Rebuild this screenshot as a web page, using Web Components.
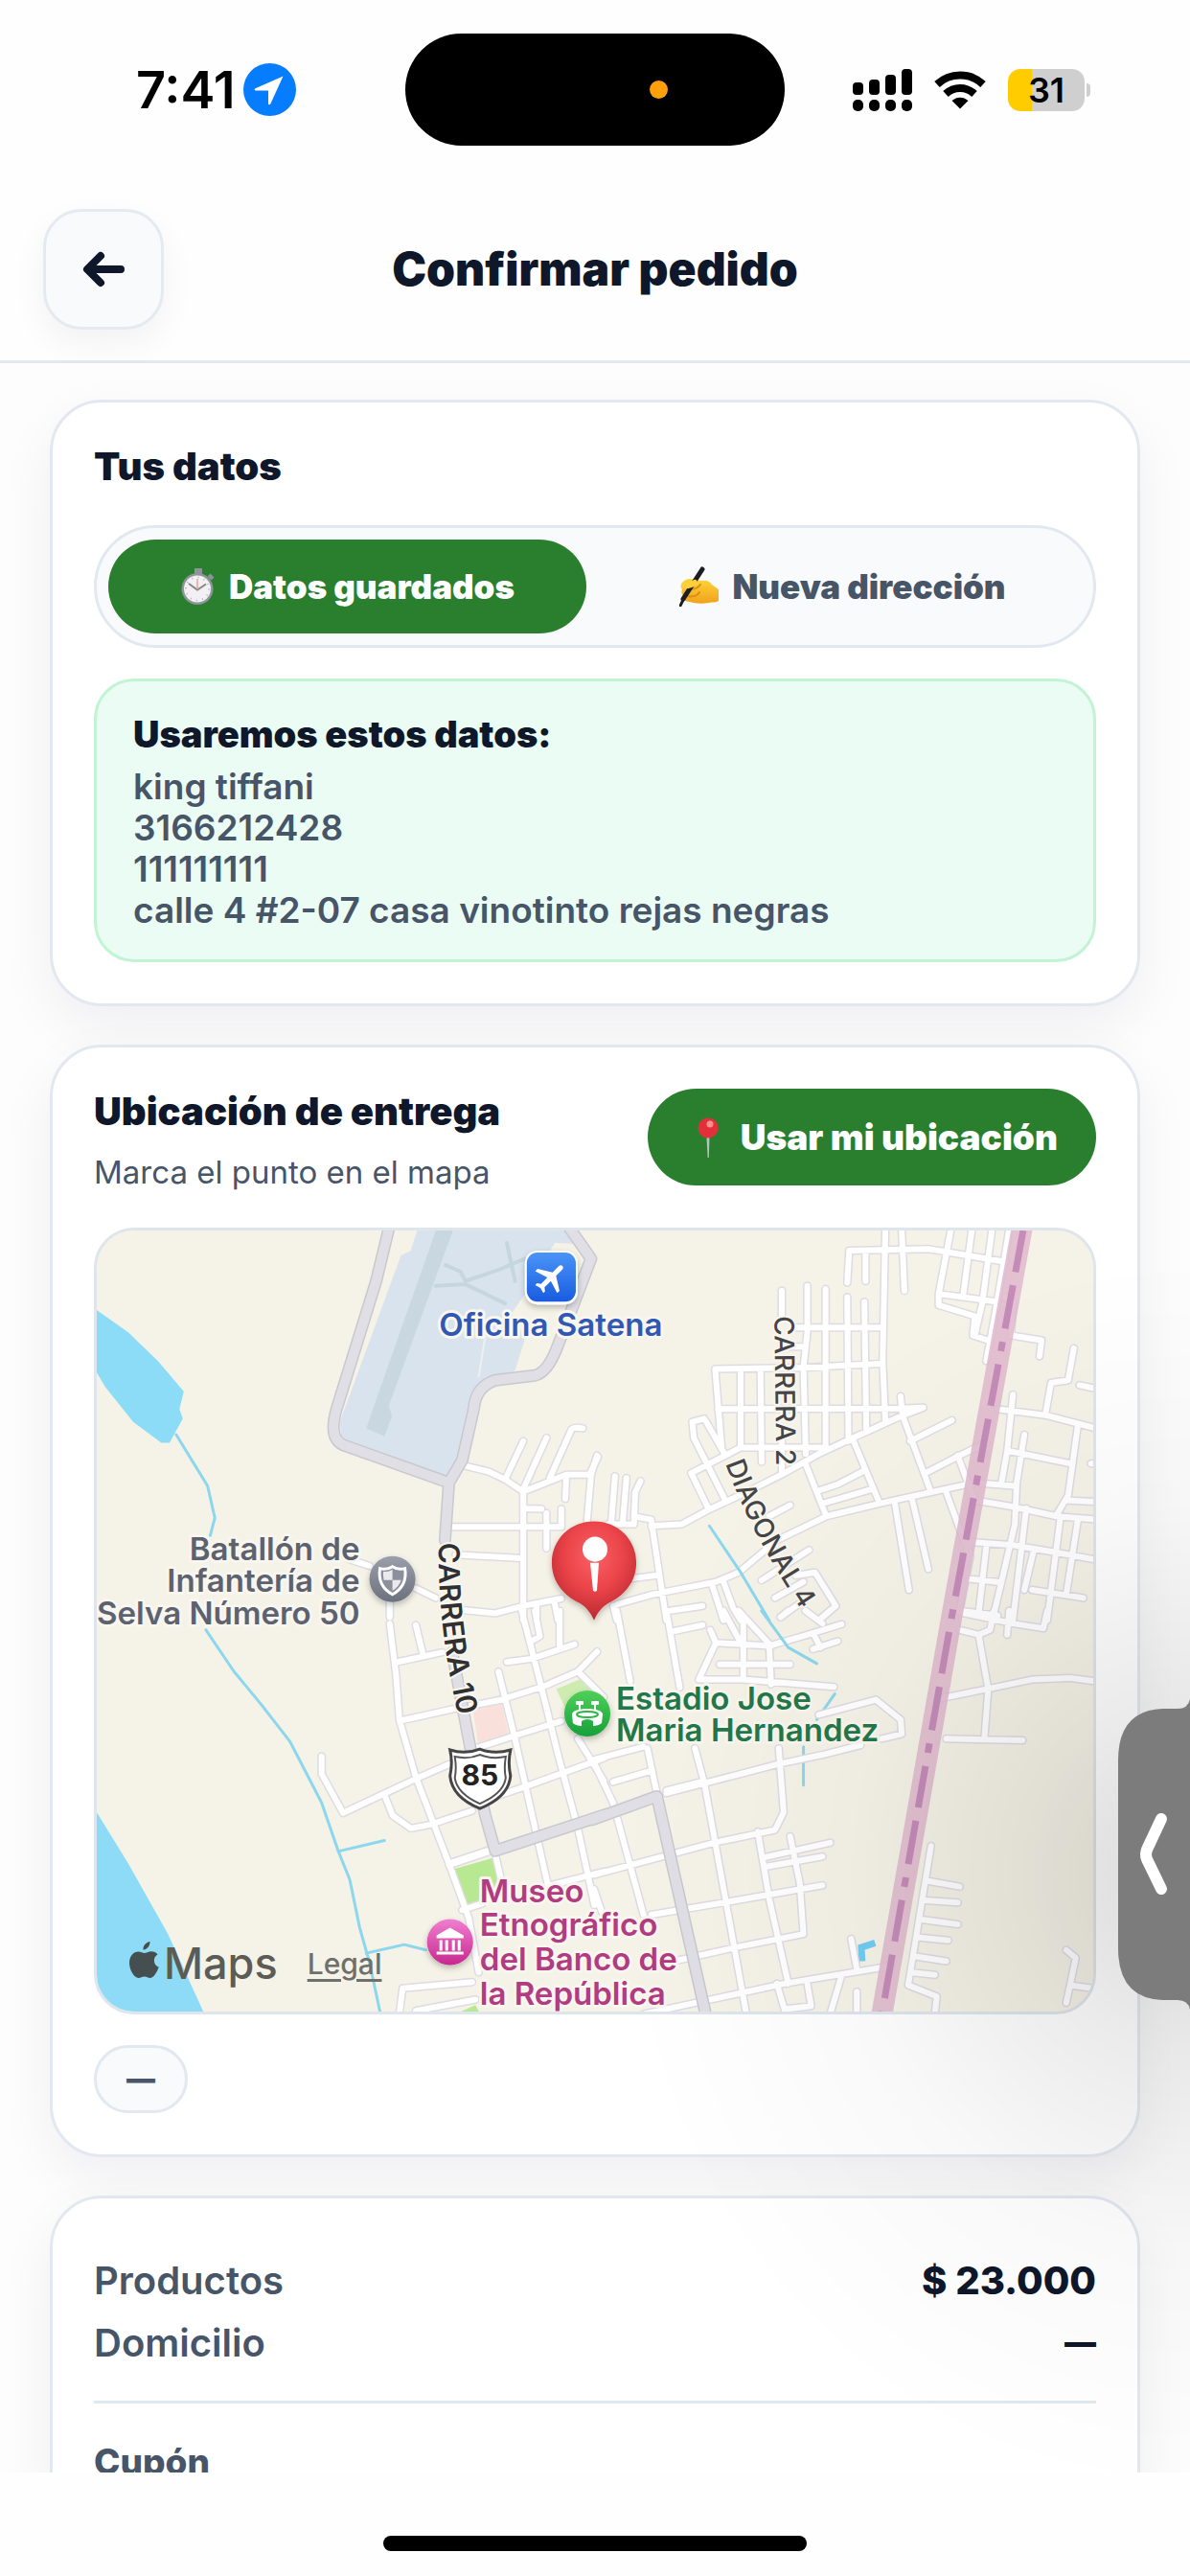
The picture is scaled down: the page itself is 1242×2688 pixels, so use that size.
<!DOCTYPE html>
<html lang="es">
<head>
<meta charset="utf-8">
<meta name="viewport" content="width=device-width, initial-scale=1">
<title>Confirmar pedido</title>
<style>
  html, body { margin: 0; height: 100%; }
  body { background: #fefefe; color: #0f172a; font-family: Inter, "Liberation Sans", sans-serif; overflow: hidden; }
</style>
</head>
<body>
<order-screen></order-screen>
<script>
const define = (name, html) => {
  const template = document.createElement('template');
  template.innerHTML = html;
  customElements.define(name, class extends HTMLElement {
    constructor() {
      super();
      this.attachShadow({ mode: 'open' }).append(template.content.cloneNode(true));
    }
  });
};

define('status-bar', `
<style>
  :host { display: grid; grid-template-columns: 1fr auto 1fr; align-items: center; height: 187px; color: #000; flex: none; }
  .left { display: flex; align-items: center; gap: 8px; padding-left: 142px; }
  .right { display: flex; align-items: center; justify-content: flex-end; gap: 23px; padding-right: 104px; }
  time { font-size: 54px; line-height: 56px; font-weight: 600; }
  .island { width: 396px; height: 117px; border-radius: 59px; background: #000; display: flex; align-items: center; justify-content: flex-end; box-sizing: border-box; padding-right: 122px; }
  .dot { width: 19px; height: 19px; border-radius: 50%; background: #ff9f0a; }
  .battery { display: flex; align-items: center; gap: 2px; }
  .cell { width: 80px; height: 44px; border-radius: 13px; background: linear-gradient(90deg, #ffcc00 31%, #cfcfcf 31%); font-size: 36px; font-weight: 600; line-height: 44px; text-align: center; }
  .nub { width: 4px; height: 14px; border-radius: 0 4px 4px 0; background: #cfcfcf; }
  svg { display: block; }
</style>
<div class="left">
  <time>7:41</time>
  <svg width="55" height="55" viewBox="0 0 55 55"><circle cx="27.500" cy="27.500" r="27.500" fill="#067cff"/><path d="M41.500 13.500 12.500 26.300c-1.400.7-1 2.300.5 2.300h13v13.300c0 1.600 1.700 1.900 2.400.4z" fill="#fff"/></svg>
</div>
<div class="island"><span class="dot"></span></div>
<div class="right">
  <svg width="62" height="44" viewBox="0 0 62 44"><rect x="0" y="14" width="11" height="13" rx="4"/><rect x="17" y="11" width="11" height="16" rx="4"/><rect x="34" y="6" width="11" height="21" rx="4"/><rect x="51" y="0" width="11" height="27" rx="4"/><rect x="0" y="32" width="11" height="12" rx="5"/><rect x="17" y="32" width="11" height="12" rx="5"/><rect x="34" y="32" width="11" height="12" rx="5"/><rect x="51" y="32" width="11" height="12" rx="5"/></svg>
  <svg width="54" height="40" viewBox="0 0 54 40"><g fill="none" stroke="#000" stroke-width="8"><path d="M3 14C16.500 1.300 37.500 1.300 51 14"/><path d="M12 24C20.500 16 33.500 16 42 24"/></g><path d="M18.500 31C23.500 26.500 30.500 26.500 35.500 31L27 39.500z"/></svg>
  <div class="battery"><div class="cell">31</div><div class="nub"></div></div>
</div>`);

define('page-header', `
<style>
  :host { display: grid; grid-template-columns: 1fr auto 1fr; align-items: center; flex: none; padding: 31px 45px 32px; border-bottom: 3px solid #e2e8f0; }
  button { width: 126px; height: 126px; padding: 0; border: 3px solid #e5eaf1; border-radius: 40px; background: #f8fafc; box-shadow: 0 14px 36px rgba(15,23,42,.05); display: grid; place-items: center; }
  h1 { margin: 0; font-size: 48px; line-height: 60px; font-weight: 900; }
</style>
<button type="button" aria-label="Volver"><svg width="44" height="38" viewBox="0 0 44 38" fill="none" stroke="#0f172a" stroke-width="8" stroke-linecap="round" stroke-linejoin="round"><path d="M40 19H6M19 5 5 19l14 14"/></svg></button>
<h1><slot></slot></h1>`);

define('app-card', `
<style>
  :host { display: flex; flex-direction: column; padding: 43px; border: 3px solid #e3e8f0; border-radius: 54px; background: #fff; box-shadow: 0 22px 60px rgba(15,23,42,.06); }
</style>
<slot></slot>`);

define('section-title', `
<style>
  :host { display: block; }
  h2 { margin: 0; font-size: 40px; line-height: 48px; font-weight: 900; }
</style>
<h2><slot></slot></h2>`);

define('data-switch', `
<style>
  :host { display: grid; grid-template-columns: 1fr 1fr; gap: 18px; margin-top: 37px; padding: 12px; border: 3px solid #e2e8f0; border-radius: 64px; background: #f8fafc; }
  button { display: flex; align-items: center; justify-content: center; gap: 13px; height: 98px; border: 0; border-radius: 49px; background: transparent; color: #475569; font: 900 35px/44px Inter, "Liberation Sans", sans-serif; padding: 0; }
  .on { background: #2a7f2e; color: #fff; }
</style>
<button type="button" class="on" aria-pressed="true">
  <svg width="38" height="40" viewBox="0 0 38 40"><path d="M15 1h8v7h-8z" fill="#8d959b"/><path d="m30 8 4 4" stroke="#8d959b" stroke-width="4"/><circle cx="18" cy="22.500" r="16.500" fill="#8e9499"/><circle cx="18" cy="22.500" r="14" fill="#f2f0f2"/><circle cx="18" cy="22.500" r="12" fill="none" stroke="#b9b7bc" stroke-width="2" stroke-dasharray="1 5.300"/><path d="m9 17 9 6.500 9-6" fill="none" stroke="#878783" stroke-width="2"/><path d="M18 12v11" stroke="#e9a2a2" stroke-width="1.500"/></svg>
  <span>Datos guardados</span>
</button>
<button type="button" aria-pressed="false">
  <svg width="42" height="42" viewBox="0 0 42 42"><defs><linearGradient id="skin" x2="0" y2="1"><stop stop-color="#ffd43a"/><stop offset="1" stop-color="#f0a21c"/></linearGradient></defs><path d="M3 17c3-4 9-5 12-3l9 1c5-1 8 1 10 4l7 5v12c-3 2-7 1-10 2-7 1-14 1-20-1-5 0-7-3-6-6-3-2-3-5-2-7-2-2-2-5 0-7z" fill="url(#skin)"/><path d="M11 24c5 0 9-2 11-5M8 31c5 1 11 0 13-4" fill="none" stroke="#dd8f13" stroke-width="2" stroke-linecap="round"/><path d="M24 3 4 34" stroke="#1d1d22" stroke-width="5" stroke-linecap="round"/><path d="M5 33 1 41" stroke="#1d1d22" stroke-width="3" stroke-linecap="round"/><path d="M5 20c4 1 8-1 11-3" fill="none" stroke="#ffd03a" stroke-width="6" stroke-linecap="round"/></svg>
  <span>Nueva dirección</span>
</button>`);

define('saved-data', `
<style>
  :host { display: block; margin-top: 32px; padding: 33px 38px 30px; border: 3px solid #c3f3d5; border-radius: 42px; background: #eafcf3; }
  strong { display: block; font-size: 38px; line-height: 44px; font-weight: 900; margin-bottom: 11px; }
  div { color: #475569; font-size: 37px; line-height: 43px; font-weight: 600; }
</style>
<strong>Usaremos estos datos:</strong>
<div>king tiffani</div><div>3166212428</div><div>111111111</div><div>calle 4 #2-07 casa vinotinto rejas negras</div>`);

define('location-head', `
<style>
  :host { display: flex; justify-content: space-between; align-items: flex-start; margin-bottom: 37px; }
  p { margin: 18px 0 0; color: #475569; font-size: 33px; line-height: 42px; }
  button { display: flex; align-items: center; gap: 19px; height: 101px; padding: 0 40px 0 48px; border: 0; border-radius: 51px; background: #2a7f2e; color: #fff; font: 900 37px/48px Inter, "Liberation Sans", sans-serif; }
</style>
<div><section-title>Ubicación de entrega</section-title><p>Marca el punto en el mapa</p></div>
<button type="button">
  <svg width="30" height="42" viewBox="0 0 30 42"><path d="M13.500 20h3L15.800 42h-1.200z" fill="#b7c3bb"/><circle cx="15" cy="11" r="10.500" fill="#e2303a"/><circle cx="17" cy="7" r="3.500" fill="#ff8d8d"/></svg>
  <span>Usar mi ubicación</span>
</button>`);

/* Map tiles: each group of streets is written in the units of its own tile. */
const tiles = {
  nw: 'translate(90 1270) scale(.34439 .33333)',
  ne: 'translate(620 1270) scale(.39668 .33333)',
  sw: 'translate(90 1680) scale(.34439 .33333)',
  se: 'translate(620 1680) scale(.39668 .33333)'
};
const streets = {
  nw: 'M1140 775L1220 795L1270 820L1325 858L1455 805L1530 805M1270 820L1325 700M1325 850L1395 690M1405 815L1470 665Q1475 655 1505 660M1455 805L1452 880M1548 745L1530 805L1518 950M1325 858L1325 1260M1100 968L1440 968M1325 910L1380 912M1395 925L1395 1035M1440 912L1440 968M1120 1055L1320 1066M1140 1228L1240 1238L1325 1215L1440 1192M1365 1215L1365 1260M1420 1208L1430 1260M1000 1160L1060 1190M921 1190L921 1250M800 1070L860 1090',
  ne: 'M493 230L493 310M493 690L493 800M560 215L560 360L550 470L556 740M608 225L608 720M665 250L668 700M710 265L715 670M765 40L758 450L765 640M808 40L815 230M665 205L670 105L880 100L980 120L1080 140M713 105L713 200M937 40L905 240L905 275L1000 310L995 370L1035 385M992 40L970 240M1045 40L1020 265L1000 370M1090 40L1055 290L1030 450M905 240L1060 265M530 345L755 345M515 405L550 405M318 475L550 470L755 458M318 475L335 720M385 475L385 720M437 475L440 765M325 600L800 598L865 595L800 625L680 690L590 740L500 800L400 860L300 915L230 960L150 965M805 560L810 620L885 860M830 700L940 635M870 800L960 745L1030 705M385 720L610 720M385 720L255 800L300 910M258 640L290 630L345 745M258 640L262 690L345 885M555 770L610 935M680 695L750 895M590 855L640 835L705 795M600 895L730 850M610 935L480 1010L380 1110L320 1140L150 1180L60 1210M610 935L750 895L885 860L1000 830L1100 840M955 745L1000 890M790 895L827 1165M835 880L878 1100M925 860L980 1040M460 935L515 900M440 1135L565 1040M475 1190L550 1140M490 1250L560 1190M530 1120L580 1110L635 1215L600 1250M45 960L55 810M75 960L85 815M105 960L108 860L122 825M35 960L105 960M105 935L150 945L190 1260M95 1130L160 1120M200 1230L285 1215M310 1150L340 1260M340 1140L365 1220L385 1260M50 1215L60 1260M-10 800L10 750M1080 250L1100 265L1095 370L1175 385L1170 435M1260 410L1245 510L1200 518L1185 620M1275 525L1325 538M1060 600L1190 620L1325 662M1100 555L1085 730L1070 830M1085 730L1250 770M1130 680L1110 830L1105 960L1070 1140L1050 1240M1270 655L1245 870L1215 930M1240 885L1325 890M1000 885L1100 905L1215 935L1325 945M1135 910L1100 1260M985 1015L1100 1025L1200 1045L1325 1072M1225 935L1190 1260M1270 950L1240 1180M1155 1040L1130 1165M1030 1030L1010 1240M980 1130L1060 1140M1150 1165L1285 1190M980 1020L988 1060L960 1230L1060 1245M1305 770L1325 770',
  sw: 'M921 40L940 200L950 340L1000 520L1100 790L1160 960L1190 1130M1000 45L1020 130M945 160L1080 130M960 342L1100 310L1250 280L1390 235L1490 190L1548 128M715 455L715 510L780 632L1000 525L1100 480M905 575L930 640L985 680L1045 668L1170 625M1180 430L1300 390L1440 345M1200 595L1330 550L1570 460M1250 190L1300 400L1365 700L1400 860M1320 0L1380 240L1430 450L1490 680L1540 920M1360 0L1375 80L1350 95M1435 0L1435 110M1275 160L1350 150L1480 105M1490 190L1568 270M1490 400L1568 530M1240 760L1260 850M1100 795L1215 755M1100 790L1215 750M1400 860L1570 815M1140 935L1200 915M950 1260L960 1180L1170 1160M1000 1250L1180 1215',
  se: 'M60 0L95 220M190 0L225 240M205 65L285 45M340 0L385 100M380 0L465 110M305 60L320 100L460 110L560 75L650 42M555 0L600 40M490 20L510 0M590 30L620 0M575 70L595 115M575 120L640 95M320 100L275 215L390 215L630 238M392 30L392 215M460 110L465 230M330 168L515 168M590 325L740 278L805 340L808 385L755 400M190 570L480 480L600 450L700 420M190 562L290 532M485 430L498 630L475 685L315 725L0 825M265 430L290 540L400 1260M140 430L165 570M0 465L130 425M0 475L50 600L130 950M50 535L150 500M430 690L460 900L510 1165M450 770L620 725M450 800L600 768M515 705L540 850L550 1010L380 1050L210 1095M150 950L350 910L600 858M0 870L20 940M130 1260L500 1165L780 1110M480 1165L500 1245L570 1235L560 1165M650 1140L620 1260M690 1190L690 1260M675 1025L690 1120M885 735L825 1170L900 1205L895 1260M880 845L960 862M870 905L955 912M860 965L955 980M850 1020L930 1030M845 1080L925 1095M835 1130L895 1138M1240 1060L1265 1085L1250 1170L1310 1180M1250 1170L1240 1225M905 275L1030 245L1150 215L1250 210L1325 222M1010 75L1035 245L1025 400M925 400L1125 405M960 60L1010 75L1040 60L1050 0M960 5L1100 40L1180 55L1190 0M1090 0L1085 75'
};
const avenues = {
  nw: 'M922 20L880 200L760 600Q735 690 780 712L1100 830M1455 20L1530 130L1430 400Q1400 485 1360 495L1240 510Q1180 530 1175 600L1140 760L1100 830L1088 1010',
  sw: 'M1110 130L1165 430L1210 640L1240 750L1570 638',
  se: 'M-5 653L165 580L295 1270'
};
const layer = (set, cls) => Object.entries(set).map(([tile, d]) => `<path class="${cls}" transform="${tiles[tile]}" d="${d}"/>`).join('');

define('delivery-map', `
<style>
  :host { display: block; position: relative; border: 3px solid #dfe5ec; border-radius: 42px; overflow: hidden; background: #f5f2e7; }
  svg { display: block; width: 100%; height: auto; }
  path { vector-effect: non-scaling-stroke; }
  .case, .road, .acase, .avenue, .creek, .taxi { fill: none; stroke-linecap: round; stroke-linejoin: round; }
  .case { stroke: #dfdbe3; stroke-width: 9; }
  .road { stroke: #fff; stroke-width: 6; }
  .acase { stroke: #c9c8ce; stroke-width: 13; }
  .avenue { stroke: #dfdfe5; stroke-width: 10; }
  .creek { stroke: #8cd7ee; stroke-width: 3; }
  .taxi { stroke: #c6d6df; stroke-width: 4; }
  text { font-family: Inter, "Liberation Sans", sans-serif; font-size: 33px; font-weight: 600; paint-order: stroke; stroke: #f8f6ee; stroke-width: 6px; stroke-linejoin: round; }
  .street { font-size: 28px; font-weight: 500; fill: #454547; stroke-width: 4px; }
  .main { font-size: 30px; font-weight: 600; fill: #303033; }
  .end { text-anchor: end; fill: #5d6270; }
  .green { fill: #23784a; }
  .pink { fill: #b13c82; }
  .plain { font-size: 30px; font-weight: 700; fill: #222; stroke: none; }
  footer { position: absolute; left: 34px; bottom: 24px; display: flex; align-items: center; color: #5c5c57; }
  .brand { font-size: 45px; line-height: 52px; font-weight: 500; margin-left: 5px; }
  footer svg { width: 31px; height: 46px; }
  a { color: #6f6f6b; font-size: 30px; line-height: 36px; font-weight: 500; margin-left: 31px; text-decoration-thickness: 3px; text-underline-offset: 5px; }
</style>
<svg viewBox="102 1284 1038 813" role="img" aria-label="Mapa de entrega">
  <defs>
    <linearGradient id="blue" x2="0" y2="1"><stop stop-color="#4a94f7"/><stop offset="1" stop-color="#1a5ce0"/></linearGradient>
    <linearGradient id="grey" x2="0" y2="1"><stop stop-color="#9a9fab"/><stop offset="1" stop-color="#6c717e"/></linearGradient>
    <linearGradient id="leaf" x2="0" y2="1"><stop stop-color="#4fd05a"/><stop offset="1" stop-color="#16a03a"/></linearGradient>
    <linearGradient id="rose" x2="0" y2="1"><stop stop-color="#f07fd0"/><stop offset="1" stop-color="#c8278f"/></linearGradient>
    <radialGradient id="red" cx=".5" cy=".35" r=".7"><stop stop-color="#fb6265"/><stop offset=".5" stop-color="#ea4349"/><stop offset="1" stop-color="#b0242a"/></radialGradient>
    <filter id="soft" x="-30%" y="-30%" width="160%" height="160%"><feDropShadow dx="0" dy="3" stdDeviation="3" flood-opacity=".25"/></filter>
    <path id="c10" d="M458 1609C458 1680 464 1728 484 1815"/>
    <path id="c2" d="M808 1373L810 1545"/>
    <path id="d4" d="M757 1527Q785 1605 845 1692"/>
  </defs>
  <rect x="90" y="1270" width="1060" height="840" fill="#f5f2e7"/>
  <g transform="${tiles.nw}">
    <path fill="#d9e3ee" d="M1010 20L985 105L955 120L770 640L775 695L1100 820L1140 740L1180 540L1230 505L1300 480L1330 380L1290 300L1330 240L1420 80L1490 85L1450 20Z"/>
    <path fill="#c8d7e0" d="M1068 20L1120 20L918 590L928 622L905 685L850 660L870 600Z"/>
    <path class="taxi" d="M1090 150L1135 170L1150 200L1250 165L1330 130M1060 215L1150 210L1270 270M1275 80L1300 200"/>
    <path fill="none" stroke="#eef0ee" stroke-width="2" d="M1210 370L1190 500"/>
    <path fill="#8cdcf8" d="M20 280L130 360L220 450L298 545L285 600L295 630L255 705L230 705L145 640L60 530L20 460Z"/>
    <path class="creek" d="M275 680L370 840L392 940L378 995"/>
  </g>
  <g transform="${tiles.sw}">
    <path fill="#8edbf7" d="M20 605L130 790L250 1010L365 1270L20 1270Z"/>
    <path class="creek" d="M365 60L450 190L530 290L620 410L715 600L765 750L800 840L830 990L860 1100L895 1270M765 752L905 718M850 1070L965 1043L1030 1060"/>
    <path fill="#b9e892" d="M1105 810L1235 772L1262 850L1180 912L1148 920ZM1120 1260L1180 1232L1200 1270Z"/>
    <path fill="#cdecb0" d="M1425 245L1505 210L1550 260L1450 300Z"/>
    <path fill="#fae0da" d="M1172 305L1260 288L1282 398L1190 425Z"/>
  </g>
  <path class="creek" transform="${tiles.se}" d="M550 425L550 545M632 260L585 340"/>
  <path transform="${tiles.se}" fill="none" stroke="#72cdf2" stroke-width="7" d="M704 1095L702 1052L738 1038"/>
  ${layer(streets, 'case')}${layer(streets, 'road')}
  <path class="creek" transform="${tiles.ne}" d="M303 965L385 1110L460 1260"/>
  <path class="creek" transform="${tiles.se}" d="M440 0L510 115L585 165"/>
  <path fill="none" stroke="#dfb9cd" stroke-opacity=".85" stroke-width="22" d="M1067 1275L993 1684L919 2105"/>
  <path fill="none" stroke="#c083b5" stroke-opacity=".85" stroke-width="7" stroke-dasharray="44 14 46 14 10 14" d="M1067 1284L993 1684L919 2105"/>
  ${layer(avenues, 'acase')}${layer(avenues, 'avenue')}

  <text class="street main"><textPath href="#c10">CARRERA 10</textPath></text>
  <text class="street"><textPath href="#c2">CARRERA 2</textPath></text>
  <text class="street"><textPath href="#d4">DIAGONAL 4</textPath></text>

  <g filter="url(#soft)"><rect x="548" y="1305" width="55" height="56" rx="13" fill="#fff"/><rect x="550" y="1307" width="51" height="51" rx="11" fill="url(#blue)"/></g>
  <path fill="#fff" transform="translate(575 1333) rotate(45) scale(1.700) translate(-11.500 -12)" d="M21 16v-2l-8-5V3.500c0-.83-.67-1.500-1.500-1.500S10 2.670 10 3.500V9l-8 5v2l8-2.500V19l-2 1.500V22l3.500-1 3.500 1v-1.500L13 19v-5.500l8 2.500z"/>
  <text x="575" y="1394" text-anchor="middle" fill="#3159b4">Oficina Satena</text>

  <g filter="url(#soft)"><circle cx="410" cy="1647" r="24" fill="url(#grey)"/></g>
  <path d="M410 1634Q404 1638 397 1636Q394 1654 410 1663Q426 1654 423 1636Q416 1638 410 1634Z" fill="#8b909c" stroke="#fff" stroke-width="3"/>
  <path d="M410 1639v9h-9q-1-5-.5-9q5 1 9.500-2zM410 1648h9q-2 7-9 11z" fill="#e9eaee"/>
  <text class="end"><tspan x="376" y="1627">Batallón de</tspan><tspan x="376" y="1660">Infantería de</tspan><tspan x="376" y="1694">Selva Número 50</tspan></text>

  <g filter="url(#soft)"><circle cx="613" cy="1787" r="24" fill="url(#leaf)"/></g>
  <g fill="#fff"><rect x="601" y="1774" width="8" height="4" rx="1"/><rect x="617" y="1774" width="8" height="4" rx="1"/><path d="M604 1776h2v7h-2zM620 1776h2v7h-2z"/><path d="M597 1788c0-8 32-8 32 0l-1 9c-2 2-6 3-9 3v-5q-6-4-12 0v5c-3 0-7-1-9-3z"/></g>
  <ellipse cx="613" cy="1788" rx="11" ry="3" fill="none" stroke="#2db54a" stroke-width="2"/>
  <text class="green"><tspan x="643" y="1783">Estadio Jose</tspan><tspan x="643" y="1816">Maria Hernandez</tspan></text>

  <g filter="url(#soft)"><circle cx="470" cy="2025" r="24" fill="url(#rose)"/></g>
  <path fill="#fff" d="M470 2010l14 8v3h-28v-3zM459 2023h3v11h-3zM465 2023h3v11h-3zM472 2023h3v11h-3zM478 2023h3v11h-3zM456 2035h28v3h-28z"/>
  <text class="pink"><tspan x="501" y="1984">Museo</tspan><tspan x="501" y="2019">Etnográfico</tspan><tspan x="501" y="2055">del Banco de</tspan><tspan x="501" y="2090">la República</tspan></text>

  <path d="M470 1825q16 5 31-1q15 6 32 1q-3 13 0 27q-2 22-32 34q-29-12-31-34q3-14 0-27z" fill="#fff" stroke="#454545" stroke-width="3"/>
  <path d="M475 1832q14 3 26-2q13 5 27 2q-2 12 0 22q-2 16-27 27q-24-11-26-27q2-10 0-22z" fill="#fff" stroke="#555" stroke-width="2"/>
  <text class="plain" x="501" y="1862" text-anchor="middle">85</text>

  <g filter="url(#soft)"><path d="M620 1587c25 0 44 19 44 43 0 21-14 35-29 42-7 4-12 11-15 18-3-7-8-14-15-18-15-7-29-21-29-42 0-24 19-43 44-43z" fill="url(#red)"/></g>
  <circle cx="621" cy="1616" r="13" fill="#fff"/><path d="M616 1630h9l-2 29q-2 2-4 0z" fill="#fff"/>
</svg>
<footer>
  <svg viewBox="0 0 31 46" fill="#454f50"><path d="M21.500 0c.3 4-3 8.500-7 8.600C14 4.500 17.500.700 21.500 0zM29.500 13.500c-5.500 3.200-4.500 11 1.200 13.300C29 31.500 25.500 38 21.700 38c-2.400 0-3.300-1.400-6-1.400S12 38 9.600 38C5 38 0 29.500 0 22.300 0 15 4.500 10.500 9.300 10.500c2.700 0 4.700 1.600 6.500 1.600 1.700 0 4-1.800 7.200-1.800 2.500 0 5 1.200 6.500 3.200z"/></svg>
  <span class="brand">Maps</span>
  <a href="#legal">Legal</a>
</footer>`);

define('status-pill', `
<style>
  :host { display: flex; align-self: flex-start; margin-top: 32px; padding: 0 31px; height: 65px; line-height: 65px; border: 3px solid #e2e8f0; border-radius: 36px; background: #f8fafc; color: #475569; font-size: 30px; font-weight: 900; }
</style>
<slot></slot>`);

define('order-summary', `
<style>
  :host { display: block; padding-top: 10px; }
  dl { margin: 0; padding-bottom: 28px; border-bottom: 3px solid #e2e8f0; font-size: 40px; line-height: 65px; }
  div { display: flex; justify-content: space-between; }
  dt { color: #475569; font-weight: 600; }
  dd { margin: 0; font-weight: 800; }
  .none { font-size: 33px; font-weight: 900; }
  h3 { margin: 37px 0 0; font-size: 37px; line-height: 48px; font-weight: 800; color: #475569; }
</style>
<dl><div><dt>Productos</dt><dd>$ 23.000</dd></div><div><dt>Domicilio</dt><dd class="none">—</dd></div></dl>
<h3>Cupón</h3>`);

define('edge-handle', `
<style>
  :host { display: block; position: fixed; right: 0; top: 1280px; width: 700px; height: 1300px; pointer-events: none; background: radial-gradient(ellipse 600px 650px at 100% 52%, rgba(0,0,0,.15), rgba(0,0,0,.08) 28%, rgba(0,0,0,.022) 60%, rgba(0,0,0,0)); }
  button { position: absolute; right: 0; top: 493px; width: 75px; height: 324px; padding: 0; border: 0; background: none; pointer-events: auto; }
  svg { display: block; }
</style>
<button type="button" aria-label="Abrir panel"><svg width="75" height="324" viewBox="0 0 75 324"><path d="M75 0Q73 10 62 10H46Q0 12 0 64V260Q0 312 46 314H62Q73 314 75 324Z" fill="#7c7c7c"/><path d="M45 125 30 157Q28 162 30 167L45 198" fill="none" stroke="#fff" stroke-width="12" stroke-linecap="round"/></svg></button>`);

define('home-indicator', `
<style>
  :host { display: flex; justify-content: center; flex: none; height: 108px; box-sizing: border-box; padding-top: 66px; background: #fefefe; z-index: 1; }
  span { width: 442px; height: 16px; border-radius: 8px; background: #000; }
</style>
<span></span>`);

define('order-screen', `
<style>
  :host { display: flex; flex-direction: column; height: 100vh; overflow: hidden; }
  main { flex: 1; min-height: 0; overflow: hidden; display: flex; flex-direction: column; gap: 40px; padding: 38px 52px 0; background: #fdfdfe; }
  app-card { flex: none; }
</style>
<status-bar></status-bar>
<page-header>Confirmar pedido</page-header>
<main>
  <app-card><section-title>Tus datos</section-title><data-switch></data-switch><saved-data></saved-data></app-card>
  <app-card><location-head></location-head><delivery-map></delivery-map><status-pill>—</status-pill></app-card>
  <app-card><order-summary></order-summary></app-card>
</main>
<home-indicator></home-indicator>
<edge-handle></edge-handle>`);
</script>
</body>
</html>
